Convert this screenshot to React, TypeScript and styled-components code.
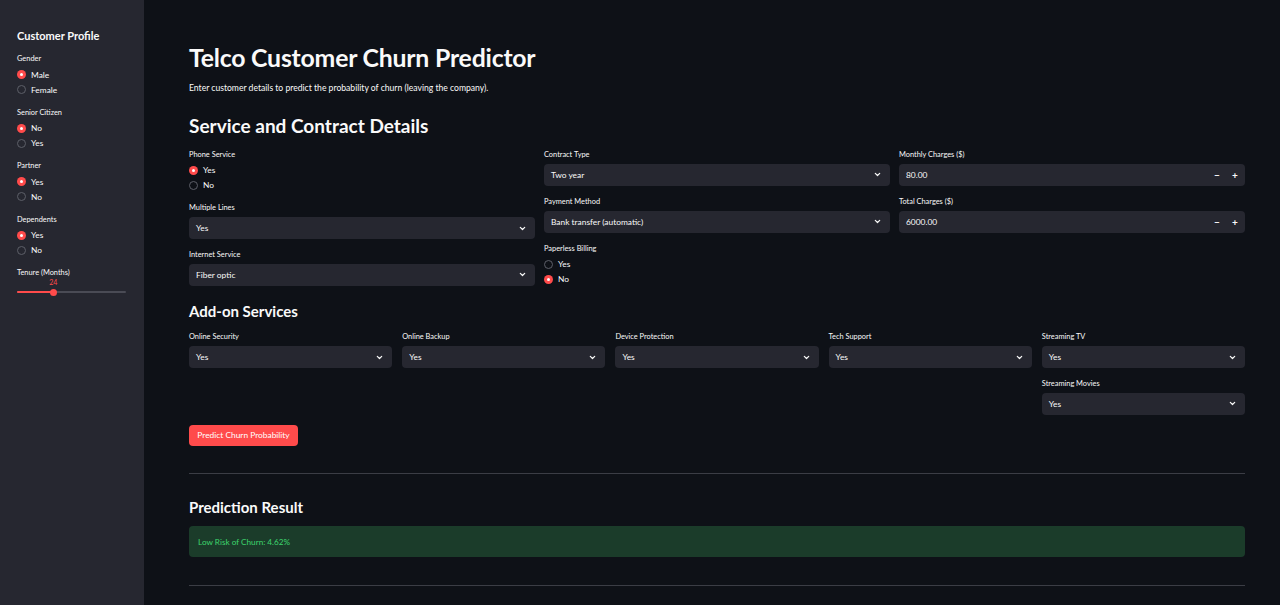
import React from "react";
import styled, { createGlobalStyle } from "styled-components";

const GlobalStyle = createGlobalStyle`
  html, body { margin: 0; padding: 0; background: #0e1117; }
  body { font-family: "Lato", "Noto Sans", sans-serif; color: #fafafa; }
  * { box-sizing: border-box; }
`;

const Page = styled.div`
  display: flex;
  width: 1280px;
  height: 605px;
  overflow: hidden;
  background: #0e1117;
`;

const Sidebar = styled.aside`
  width: 144px;
  flex: 0 0 144px;
  background: #262730;
  padding: 29px 18px 0 17px;
  display: flex;
  flex-direction: column;
`;

const SideTitle = styled.h3`
  margin: 0 0 10px;
  font-size: 11px;
  line-height: 14px;
  font-weight: 700;
  color: #fafafa;
`;

const Main = styled.main`
  flex: 1;
  padding: 43px 35px 0 45px;
  display: flex;
  flex-direction: column;
`;

const Title = styled.h1`
  margin: 0;
  font-size: 24.8px;
  line-height: 30px;
  font-weight: 700;
  letter-spacing: -0.2px;
`;

const Subtitle = styled.p`
  margin: 9px 0 0;
  font-size: 8.6px;
  line-height: 12px;
`;

const SectionTitle = styled.h2<{ $top: number; $size?: number }>`
  margin: ${(p) => p.$top}px 0 0;
  font-size: ${(p) => p.$size ?? 15}px;
  line-height: ${(p) => (p.$size ? p.$size + 5 : 20)}px;
  font-weight: 700;
`;

const Columns = styled.div<{ $cols: number; $gap: number; $top: number }>`
  display: grid;
  grid-template-columns: repeat(${(p) => p.$cols}, 1fr);
  column-gap: ${(p) => p.$gap}px;
  margin-top: ${(p) => p.$top}px;
  align-items: start;
`;

const Stack = styled.div<{ $gap: number }>`
  display: flex;
  flex-direction: column;
  gap: ${(p) => p.$gap}px;
`;

const Field = styled.div`
  display: flex;
  flex-direction: column;
`;

const Label = styled.div<{ $gap?: number }>`
  font-size: 7.4px;
  line-height: 11px;
  color: #fafafa;
  margin-bottom: ${(p) => p.$gap ?? 4}px;
`;

const Box = styled.div<{ $stepper?: boolean }>`
  height: 22px;
  background: #262730;
  border-radius: 4px;
  display: flex;
  align-items: center;
  padding: 0 ${(p) => (p.$stepper ? 1 : 9)}px 0 7px;
  font-size: 8.4px;
  color: #fafafa;
`;

const BoxText = styled.span`
  flex: 1;
`;

const Step = styled.span`
  width: 18px;
  text-align: center;
  font-size: 10px;
  font-weight: 700;
  color: #fafafa;
`;

const OptionRow = styled.label`
  display: flex;
  align-items: center;
  height: 15px;
  gap: 5px;
  font-size: 8.4px;
  color: #fafafa;
`;

const Dot = styled.span<{ $on: boolean }>`
  width: 9px;
  height: 9px;
  border-radius: 50%;
  flex: 0 0 9px;
  display: flex;
  align-items: center;
  justify-content: center;
  background: ${(p) => (p.$on ? "#ff4b4b" : "transparent")};
  border: ${(p) => (p.$on ? "none" : "1px solid #5d5f68")};
  &::after {
    content: "";
    width: 3px;
    height: 3px;
    border-radius: 50%;
    background: ${(p) => (p.$on ? "#ffffff" : "transparent")};
  }
`;

const SideGroup = styled.div`
  display: flex;
  flex-direction: column;
  margin-bottom: 9.5px;
`;

const SliderWrap = styled.div`
  position: relative;
  height: 20px;
`;

const Track = styled.div`
  position: absolute;
  left: 0;
  right: 0;
  top: 13px;
  height: 2px;
  border-radius: 1px;
  background: #4a4b55;
`;

const Fill = styled.div`
  position: absolute;
  left: 0;
  top: 13px;
  height: 2px;
  border-radius: 1px;
  background: #ff4b4b;
`;

const Thumb = styled.div`
  position: absolute;
  top: 10.5px;
  width: 7px;
  height: 7px;
  margin-left: -3.5px;
  border-radius: 50%;
  background: #ff4b4b;
`;

const ThumbValue = styled.div`
  position: absolute;
  top: 0;
  transform: translateX(-50%);
  font-size: 7px;
  line-height: 8px;
  color: #ff4b4b;
`;

const Button = styled.button`
  align-self: flex-start;
  margin-top: 10px;
  height: 21px;
  width: 109px;
  border: none;
  border-radius: 4px;
  background: #ff4b4b;
  color: #ffffff;
  font-family: inherit;
  font-size: 8.4px;
  padding: 0;
`;

const Divider = styled.hr<{ $top: number }>`
  margin: ${(p) => p.$top}px 0 0;
  border: none;
  height: 1px;
  background: #3b3d45;
`;

const Alert = styled.div`
  margin-top: 9px;
  height: 31px;
  border-radius: 4px;
  background: #1b3c2a;
  color: #3dd56d;
  font-size: 8.2px;
  display: flex;
  align-items: center;
  padding-left: 9px;
`;

const Chevron = () => (
  <svg width="7" height="5" viewBox="0 0 7 5" fill="none">
    <path d="M1.3 1.3 L3.5 3.5 L5.7 1.3" stroke="#fafafa" strokeWidth="1.2" strokeLinecap="round" strokeLinejoin="round" />
  </svg>
);

const Radio = ({ label, options, value }: { label: string; options: string[]; value: string }) => (
  <Field>
    <Label $gap={3}>{label}</Label>
    {options.map((o) => (
      <OptionRow key={o}>
        <Dot $on={o === value} />
        {o}
      </OptionRow>
    ))}
  </Field>
);

const Select = ({ label, value }: { label: string; value: string }) => (
  <Field>
    <Label>{label}</Label>
    <Box>
      <BoxText>{value}</BoxText>
      <Chevron />
    </Box>
  </Field>
);

const NumberInput = ({ label, value }: { label: string; value: string }) => (
  <Field>
    <Label>{label}</Label>
    <Box $stepper>
      <BoxText>{value}</BoxText>
      <Step>−</Step>
      <Step>+</Step>
    </Box>
  </Field>
);

const Slider = ({ label, value, min, max }: { label: string; value: number; min: number; max: number }) => {
  const pct = ((value - min) / (max - min)) * 100;
  return (
    <Field>
      <Label $gap={0}>{label}</Label>
      <SliderWrap>
        <Track />
        <Fill style={{ width: `${pct}%` }} />
        <ThumbValue style={{ left: `${pct}%` }}>{value}</ThumbValue>
        <Thumb style={{ left: `${pct}%` }} />
      </SliderWrap>
    </Field>
  );
};

const sideGroups = [
  { label: "Gender", options: ["Male", "Female"], value: "Male" },
  { label: "Senior Citizen", options: ["No", "Yes"], value: "No" },
  { label: "Partner", options: ["Yes", "No"], value: "Yes" },
  { label: "Dependents", options: ["Yes", "No"], value: "Yes" },
];

const addons = ["Online Security", "Online Backup", "Device Protection", "Tech Support", "Streaming TV"];

export default function App() {
  return (
    <>
      <GlobalStyle />
      <Page>
        <Sidebar>
          <SideTitle>Customer Profile</SideTitle>
          {sideGroups.map((g) => (
            <SideGroup key={g.label}>
              <Radio label={g.label} options={g.options} value={g.value} />
            </SideGroup>
          ))}
          <Slider label="Tenure (Months)" value={24} min={0} max={72} />
        </Sidebar>
        <Main>
          <Title>Telco Customer Churn Predictor</Title>
          <Subtitle>Enter customer details to predict the probability of churn (leaving the company).</Subtitle>
          <SectionTitle $top={20} $size={19}>Service and Contract Details</SectionTitle>
          <Columns $cols={3} $gap={9} $top={10.5}>
            <Stack $gap={9.5}>
              <Radio label="Phone Service" options={["Yes", "No"]} value="Yes" />
              <Select label="Multiple Lines" value="Yes" />
              <Select label="Internet Service" value="Fiber optic" />
            </Stack>
            <Stack $gap={10}>
              <Select label="Contract Type" value="Two year" />
              <Select label="Payment Method" value="Bank transfer (automatic)" />
              <Radio label="Paperless Billing" options={["Yes", "No"]} value="No" />
            </Stack>
            <Stack $gap={10}>
              <NumberInput label="Monthly Charges ($)" value="80.00" />
              <NumberInput label="Total Charges ($)" value="6000.00" />
            </Stack>
          </Columns>
          <SectionTitle $top={14}>Add-on Services</SectionTitle>
          <Columns $cols={5} $gap={10} $top={10.5}>
            {addons.map((a, i) =>
              i < 4 ? (
                <Select key={a} label={a} value="Yes" />
              ) : (
                <Stack key={a} $gap={9.5}>
                  <Select label={a} value="Yes" />
                  <Select label="Streaming Movies" value="Yes" />
                </Stack>
              )
            )}
          </Columns>
          <Button>Predict Churn Probability</Button>
          <Divider $top={27.5} />
          <SectionTitle $top={23}>Prediction Result</SectionTitle>
          <Alert>Low Risk of Churn: 4.62%</Alert>
          <Divider $top={27.5} />
        </Main>
      </Page>
    </>
  );
}
